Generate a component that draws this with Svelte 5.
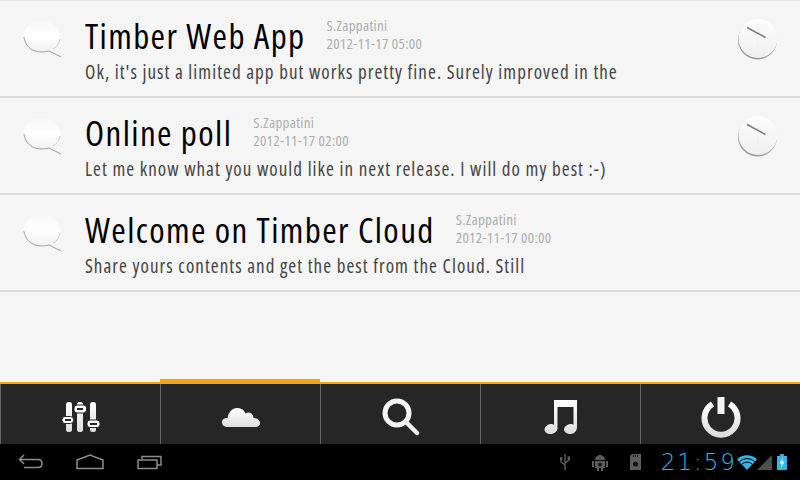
<script lang="ts">
	type Note = { title: string; author: string; date: string; text: string; timed: boolean };

	const notes: Note[] = [
		{
			title: 'Timber Web App',
			author: 'S.Zappatini',
			date: '2012-11-17 05:00',
			text: "Ok, it's just a limited app but works pretty fine. Surely improved in the",
			timed: true
		},
		{
			title: 'Online poll',
			author: 'S.Zappatini',
			date: '2012-11-17 02:00',
			text: 'Let me know what you would like in next release. I will do my best :-)',
			timed: true
		},
		{
			title: 'Welcome on Timber Cloud',
			author: 'S.Zappatini',
			date: '2012-11-17 00:00',
			text: 'Share yours contents and get the best from the Cloud. Still',
			timed: false
		}
	];
</script>

<div class="screen">
	<svg class="defs" width="0" height="0" aria-hidden="true">
		<defs>
			<linearGradient id="bubbleFill" x1="0" y1="0" x2="0" y2="1">
				<stop offset="0" stop-color="#f7f7f7" />
				<stop offset="0.5" stop-color="#ffffff" />
				<stop offset="1" stop-color="#f0f0f0" />
			</linearGradient>
			<linearGradient id="clockFill" x1="0" y1="0" x2="0" y2="1">
				<stop offset="0" stop-color="#fdfdfd" />
				<stop offset="1" stop-color="#efefef" />
			</linearGradient>
			<linearGradient id="iconFill" x1="0" y1="0" x2="0" y2="1">
				<stop offset="0" stop-color="#ffffff" />
				<stop offset="1" stop-color="#dddddd" />
			</linearGradient>
		</defs>
	</svg>

	<main class="list">
		{#each notes as note}
			<article class="row">
				<svg class="bubble" width="42" height="38" viewBox="0 0 42 38">
					<path
						d="M20 1C30 1 38 7 38 17C38 22 36 26 33 28C30 30 27 31 24 31C18 33 10 32 6 26C3 22 2 19 2 16C2 7 10 1 20 1Z"
						fill="url(#bubbleFill)"
					/>
					<path
						d="M2 17C3 24 7 29 13 31C18 32.500 23 32 27 31L39 37"
						fill="none"
						stroke="#a0a0a0"
						stroke-width="1"
					/>
					<path d="M38 19C37 24 35 27 31 29" fill="none" stroke="#cfcfcf" stroke-width="1" />
				</svg>
				<div class="body">
					<div class="head">
						<h2>{note.title}</h2>
						<div class="meta">
							<span>{note.author}</span>
							<span>{note.date}</span>
						</div>
					</div>
					<p>{note.text}</p>
				</div>
				{#if note.timed}
					<svg class="clock" width="44" height="44" viewBox="0 0 44 44">
						<circle cx="21.500" cy="22" r="19.500" fill="#7c7c7c" opacity="0.75" />
						<circle cx="22" cy="20.500" r="19.500" fill="url(#clockFill)" />
						<path d="M22 5V35" stroke="#f0f0f0" stroke-width="1" />
						<path d="M11 9.500L29.500 19.500" stroke="#7c7c7c" stroke-width="1.500" />
					</svg>
				{/if}
			</article>
		{/each}
	</main>

	<nav class="tabs">
		<button class="tab" aria-label="Settings">
			<svg width="38" height="30" viewBox="0 0 38 30">
				<g fill="url(#iconFill)">
					<rect x="4" y="0" width="6" height="30" rx="2.500" />
					<rect x="15" y="0" width="6" height="30" rx="2.500" />
					<rect x="28" y="0" width="6" height="30" rx="2.500" />
				</g>
				<g fill="#ffffff" stroke="#262626" stroke-width="1">
					<rect x="0" y="14.500" width="11.500" height="7" rx="3" />
					<rect x="12" y="3" width="12.500" height="8" rx="3" />
					<rect x="25" y="18" width="13" height="7.500" rx="3" />
				</g>
				<g fill="#262626">
					<rect x="3" y="17" width="6" height="2" />
					<rect x="15" y="6" width="6" height="2" />
					<rect x="28" y="21" width="7" height="2" />
				</g>
			</svg>
		</button>
		<button class="tab active" aria-label="Cloud">
			<svg width="40" height="21" viewBox="0 0 40 22">
				<path
					d="M6 21C2 21 0 18.500 0 16C0 13 3 11 6 11.500C6.500 6 10.500 1 16 1C20.500 1 23.500 3.500 25 7C27 5 31 5.500 32.500 9C33 10 33 11 33 11.500C37 11.500 40 14 40 17C40 19.500 38 21 35 21Z"
					fill="url(#iconFill)"
				/>
			</svg>
		</button>
		<button class="tab" aria-label="Search">
			<svg width="38" height="38" viewBox="0 0 38 38">
				<circle cx="15" cy="15" r="12" fill="none" stroke="#f4f4f4" stroke-width="5" />
				<path d="M24 24L35 35" stroke="#eeeeee" stroke-width="4.500" stroke-linecap="round" />
			</svg>
		</button>
		<button class="tab" aria-label="Music">
			<svg width="34" height="34" viewBox="0 1 34 34">
				<path
					d="M10 1H33V28C33 32 30 35 26.500 35C23 35 20 33 20 30.500C20 27.500 23.500 25 27 25C28 25 29 25.300 29.500 25.700V8H13.500V29C13.500 32.500 10 35 6.500 35C3 35 0.500 33 0.500 30.500C0.500 27.500 4 25 7 25C8 25 9.500 25.300 10 25.700Z"
					fill="url(#iconFill)"
				/>
			</svg>
		</button>
		<button class="tab" aria-label="Power">
			<svg width="40" height="41" viewBox="0 2 40 41">
				<path
					d="M11.500 9A16.500 16.500 0 1 0 28.500 9"
					fill="none"
					stroke="url(#iconFill)"
					stroke-width="6"
				/>
				<rect x="16.500" y="2" width="7" height="17" fill="#f4f4f4" />
			</svg>
		</button>
	</nav>

	<footer class="status">
		<div class="softkeys">
			<svg width="25" height="16" viewBox="0 0 25 16">
				<path
					d="M6 1L1.500 5.500L6 10M2 5.500H20C22.500 5.500 24 7 24 9.500C24 12 22.500 13.500 20 13.500H6"
					fill="none"
					stroke="#8c8c8c"
					stroke-width="1.500"
				/>
			</svg>
			<svg width="28" height="16" viewBox="0 0 28 16">
				<path d="M1 6L14 1L27 6V14.500H1Z" fill="none" stroke="#8c8c8c" stroke-width="1.500" />
			</svg>
			<svg width="26" height="16" viewBox="0 0 26 16">
				<path
					d="M1 6H20V14.500H1ZM5 5V2.500H24V11H20.500"
					fill="none"
					stroke="#8c8c8c"
					stroke-width="1.500"
				/>
			</svg>
		</div>
		<div class="tray">
			<svg class="usb" width="10" height="16" viewBox="0 0 10 16">
				<path d="M5 0V16M5 11L1 8V5M5 9L9 6V4" fill="none" stroke="#5f5f5f" stroke-width="1.400" />
				<rect x="7.500" y="2.500" width="3" height="3" fill="#5f5f5f" />
				<circle cx="1" cy="4.500" r="1.500" fill="#5f5f5f" />
			</svg>
			<svg class="robot" width="16" height="17" viewBox="0 0 16 17">
				<path d="M3 6A5 5 0 0 1 13 6Z" fill="#5a5a5a" />
				<rect x="3" y="7" width="10" height="7" fill="#5a5a5a" />
				<rect x="0" y="7" width="2" height="6" fill="#5a5a5a" />
				<rect x="14" y="7" width="2" height="6" fill="#5a5a5a" />
				<rect x="5" y="14" width="2" height="3" fill="#5a5a5a" />
				<rect x="9" y="14" width="2" height="3" fill="#5a5a5a" />
				<circle cx="8" cy="10.500" r="2" fill="#1c1c1c" />
			</svg>
			<svg class="card" width="11" height="16" viewBox="0 0 11 16">
				<path d="M0 2L2 0H11V16H0Z" fill="#5a5a5a" />
				<rect x="3" y="1" width="1" height="2" fill="#1c1c1c" />
				<rect x="5" y="1" width="1" height="2" fill="#1c1c1c" />
				<rect x="7" y="1" width="1" height="2" fill="#1c1c1c" />
				<circle cx="5.500" cy="10" r="2.500" fill="#111111" />
			</svg>
			<span class="clock-text">21:59</span>
			<svg class="wifi" width="20" height="15" viewBox="0 0 20 15">
				<path d="M0 4.500A14 14 0 0 1 20 4.500L10 15Z" fill="#33b5e5" />
				<path d="M2.500 6.500A11 11 0 0 1 17.500 6.500" fill="none" stroke="#000000" stroke-width="1" />
				<path d="M5 9A7.500 7.500 0 0 1 15 9" fill="none" stroke="#000000" stroke-width="1" />
			</svg>
			<svg class="signal" width="15" height="15" viewBox="0 0 15 15">
				<path d="M15 0V15H0Z" fill="#4d4d4d" />
			</svg>
			<svg class="battery" width="10" height="16" viewBox="0 0 10 16">
				<rect x="3" y="0" width="4" height="2" fill="#8a8a8a" />
				<rect x="0" y="2" width="10" height="14" fill="#33b5e5" />
				<path d="M6 3L2.500 9.500H5L4 14L7.500 7.500H5Z" fill="#eaffff" />
			</svg>
		</div>
	</footer>
</div>

<style>
	:global(body) {
		background: #f5f5f5;
	}

	.screen {
		display: flex;
		flex-direction: column;
		width: 800px;
		height: 480px;
		overflow: hidden;
		font-family: 'Open Sans', sans-serif;
		font-stretch: 75%;
	}

	.defs {
		position: absolute;
	}

	.list {
		flex: 1;
		background: #f5f5f5;
		border-top: 1px solid #e4e4e4;
	}

	.row {
		display: flex;
		align-items: flex-start;
		height: 95px;
		padding-left: 22px;
		padding-right: 20px;
		border-bottom: 2px solid #dcdcdc;
	}

	.bubble {
		flex: none;
		margin-top: 19px;
	}

	.body {
		flex: 1;
		min-width: 0;
		margin-left: 21px;
		padding-top: 14px;
	}

	.head {
		display: flex;
		align-items: flex-start;
		gap: 21px;
		height: 41px;
	}

	h2 {
		margin: 0;
		font-size: 35px;
		line-height: 41px;
		font-weight: 400;
		letter-spacing: 1.4px;
		color: #000;
	}

	.meta {
		display: flex;
		flex-direction: column;
		padding-top: 1px;
		font-size: 15px;
		line-height: 18px;
		letter-spacing: 0.3px;
		color: #adadad;
	}

	p {
		margin: 4px 0 0;
		font-size: 19px;
		line-height: 24px;
		letter-spacing: 1.05px;
		color: #444;
	}

	.clock {
		flex: none;
		margin-top: 17px;
	}

	.tabs {
		display: flex;
		flex: none;
		height: 60px;
		background: #262626;
		border-top: 2px solid #f5a50f;
	}

	.tab {
		position: relative;
		display: flex;
		align-items: center;
		justify-content: center;
		flex: 1;
		padding: 6px 0 0;
		background: none;
		border: 0;
		border-left: 1px solid #666;
	}

	.tab.active::before {
		content: '';
		position: absolute;
		top: -5px;
		left: -1px;
		right: 0;
		height: 5px;
		background: #f5a50f;
	}

	.status {
		display: flex;
		flex: none;
		align-items: center;
		justify-content: space-between;
		height: 36px;
		background: #000;
	}

	.softkeys {
		display: flex;
		align-items: center;
		gap: 33px;
		padding-left: 18px;
	}

	.tray {
		display: flex;
		align-items: center;
		padding-right: 13px;
	}

	.robot {
		margin-left: 22px;
	}

	.card {
		margin-left: 22px;
	}

	.clock-text {
		margin-left: 20px;
		font-family: 'DejaVu Sans', sans-serif;
		font-stretch: normal;
		font-size: 23px;
		font-weight: 200;
		letter-spacing: 2px;
		color: #33b5e5;
	}

	.signal {
		margin-left: 0;
	}

	.battery {
		margin-left: 5px;
	}
</style>
